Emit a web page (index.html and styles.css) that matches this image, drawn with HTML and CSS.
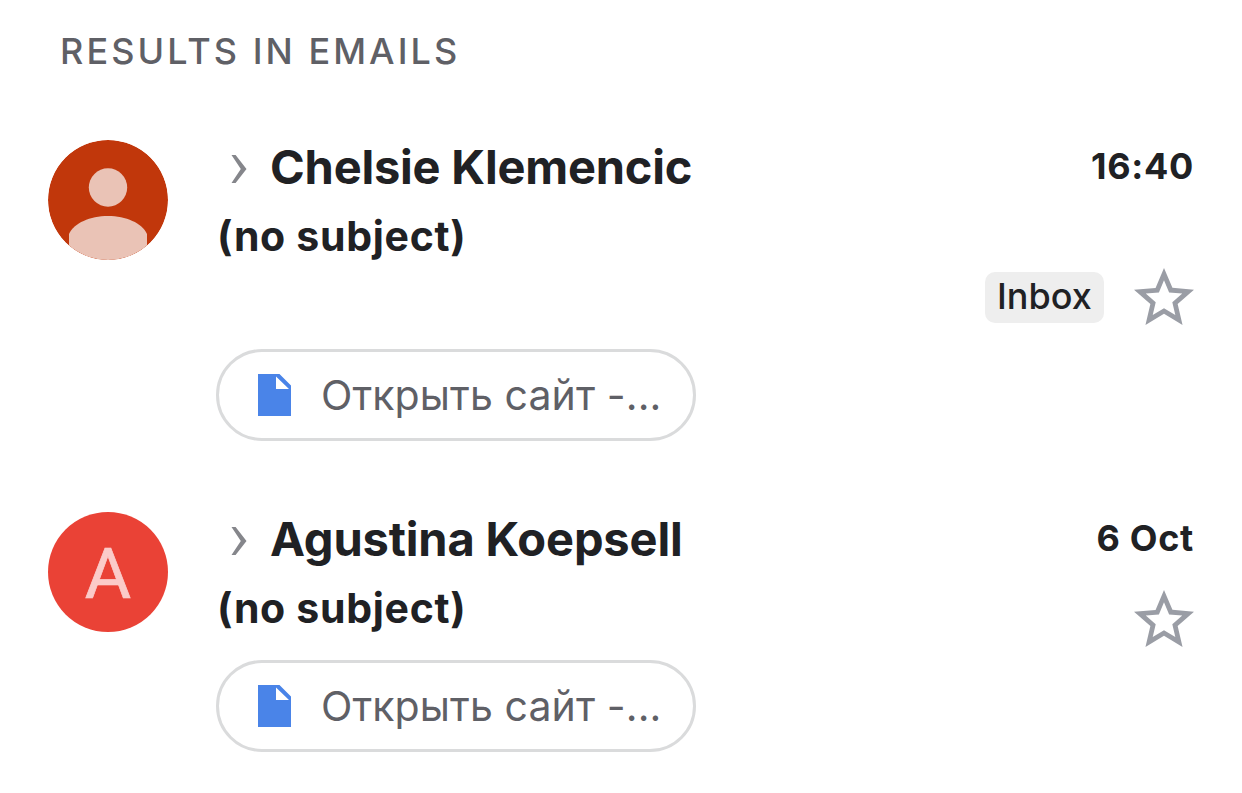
FILE: index.html
```html
<!DOCTYPE html>
<html lang="en">
<head>
<meta charset="utf-8">
<title>Results in emails</title>
<link rel="stylesheet" href="styles.css">
</head>
<body>
<svg class="sprite" width="0" height="0">
  <symbol id="star" viewBox="2 2 20 19"><path d="M22 9.24l-7.19-.62L12 2 9.19 8.63 2 9.24l5.46 4.73L5.82 21 12 17.27 18.18 21l-1.63-7.03L22 9.24zM12 15.4l-3.76 2.27 1-4.28-3.32-2.88 4.38-.38L12 6.1l1.71 4.04 4.38.38-3.32 2.88 1 4.28L12 15.4z"/></symbol>
  <symbol id="chevron" viewBox="0 0 16 28"><path d="M0.500 0H4.600L15.500 14 4.600 28H0.500L9.800 14Z"/></symbol>
  <symbol id="file" viewBox="0 0 33 42"><path fill-rule="evenodd" d="M0 0H21.500L33 11.500V42H0ZM18 2.500V15H31Z"/></symbol>
</svg>
<main class="results">
  <h1 class="heading">RESULTS IN EMAILS</h1>
  <article class="email email-labelled">
    <svg class="avatar" viewBox="0 0 120 120">
      <circle cx="60" cy="60" r="60" fill="#c1370b"/>
      <circle cx="60" cy="47.500" r="19.200" fill="#eac3b6"/>
      <path d="M21 105.600V94C26 83 42 76 60 76S94 83 99 94V105.600A60.300 60.300 0 0 1 21 105.600Z" fill="#eac3b6"/>
    </svg>
    <div class="content">
      <div class="sender"><svg class="chevron"><use href="#chevron"/></svg><span class="name name-first">Chelsie Klemencic</span></div>
      <div class="subject">(no subject)</div>
      <div class="chip"><svg class="file"><use href="#file"/></svg><span class="chip-text">Открыть сайт -...</span></div>
    </div>
    <div class="meta">
      <time class="date">16:40</time>
      <div class="actions"><span class="label">Inbox</span><svg class="star"><use href="#star"/></svg></div>
    </div>
  </article>
  <article class="email">
    <div class="avatar avatar-letter">A</div>
    <div class="content">
      <div class="sender"><svg class="chevron"><use href="#chevron"/></svg><span class="name">Agustina Koepsell</span></div>
      <div class="subject">(no subject)</div>
      <div class="chip"><svg class="file"><use href="#file"/></svg><span class="chip-text">Открыть сайт -...</span></div>
    </div>
    <div class="meta">
      <time class="date">6 Oct</time>
      <div class="actions"><svg class="star"><use href="#star"/></svg></div>
    </div>
  </article>
</main>
</body>
</html>
```

FILE: styles.css
```css
* { box-sizing: border-box; }
body { margin: 0; background: #fff; color: #202124; font-family: Inter, "Liberation Sans", sans-serif; white-space: nowrap; }
.sprite { display: none; }
.results { width: 1242px; height: 793px; padding: 29px 48px 0 48px; overflow: hidden; }
.heading { margin: 0 0 67px 12px; font-size: 36px; line-height: 44px; font-weight: 500; letter-spacing: 3.05px; color: #5f6066; }
.email { display: grid; grid-template-columns: 120px 1fr auto; column-gap: 48px; height: 311px; }
.email-labelled { height: 372px; }
.avatar { width: 120px; height: 120px; border-radius: 50%; }
.avatar-letter { display: flex; align-items: center; justify-content: center; padding-top: 3px; background: #ea4236; color: #fbcbc9; font: 400 71px Roboto, sans-serif; -webkit-text-stroke: .7px #fbcbc9; }
.sender { display: flex; align-items: center; height: 58px; padding-left: 15px; }
.chevron { width: 16px; height: 28px; margin-right: 23px; fill: #85868b; }
.name { padding-bottom: 4px; font-size: 47px; line-height: 54px; font-weight: 700; letter-spacing: -.15px; }
.name-first { letter-spacing: -.2px; }
.subject { height: 90px; padding: 12px 0 0 1px; font-size: 41px; line-height: 52px; font-weight: 700; letter-spacing: .7px; }
.email-labelled .subject { height: 151px; }
.chip { display: flex; align-items: center; width: 480px; height: 92px; padding-left: 39px; border: 3px solid #dadbdc; border-radius: 46px; color: #5f6066; font-size: 41px; letter-spacing: .1px; }
.file { width: 33px; height: 42px; margin-right: 30px; fill: #4a84e8; }
.meta { display: flex; flex-direction: column; align-items: flex-end; }
.date { height: 78px; padding-top: 3px; font-size: 36px; line-height: 46px; font-weight: 700; letter-spacing: .7px; }
.email-labelled .date { height: 127px; }
.actions { display: flex; align-items: flex-start; gap: 30px; }
.label { width: 119px; height: 51px; margin-top: 5px; padding-left: 12px; border-radius: 10px; background: #eee; font-size: 36px; line-height: 49px; font-weight: 500; }
.star { width: 60px; height: 57px; fill: #9a9da5; }
.label + .star { margin-top: 1px; }
```
